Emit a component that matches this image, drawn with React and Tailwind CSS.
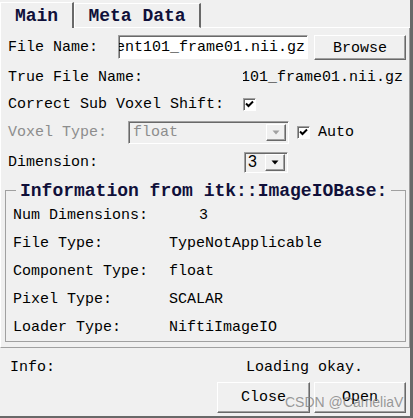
import React from 'react'

const raised =
  'border border-t-white border-l-white border-r-[#696969] border-b-[#696969] shadow-[inset_-1px_-1px_0_#a0a0a0]'
const sunken =
  'border border-t-[#a0a0a0] border-l-[#a0a0a0] border-r-white border-b-white shadow-[inset_1px_1px_0_#696969]'

function Check() {
  return (
    <div className={`w-[13px] h-[13px] bg-white flex items-center justify-center ${sunken}`}>
      <svg width="11" height="11" viewBox="0 0 11 11">
        <path d="M2 4.5 L4.5 7 L9 2.5" fill="none" stroke="#000" strokeWidth="2" />
      </svg>
    </div>
  )
}

function Arrow({ disabled }) {
  return (
    <div className={`w-[20px] h-[17px] bg-[#f0f0f0] flex items-center justify-center ${raised}`}>
      <svg width="8" height="5" viewBox="0 0 8 5">
        <path d="M0.5 0.5 H7.5 L4 4.5 Z" fill={disabled ? '#a0a0a0' : '#000'} />
      </svg>
    </div>
  )
}

const groupRows = [
  { label: 'Num Dimensions:', value: '3', pad: 'pl-[186px]' },
  { label: 'File Type:', value: 'TypeNotApplicable', pad: 'pl-[156px]' },
  { label: 'Component Type:', value: 'float', pad: 'pl-[156px]' },
  { label: 'Pixel Type:', value: 'SCALAR', pad: 'pl-[156px]' },
  { label: 'Loader Type:', value: 'NiftiImageIO', pad: 'pl-[156px]' },
]

export default function App() {
  return (
    <div className="relative w-[413px] h-[418px] bg-[#f0f0f0] border-r-[3px] border-b-2 border-r-[#696969] border-b-[#696969] text-[15px] text-black font-['Liberation_Mono',monospace] overflow-hidden">
      {/* tabs */}
      <div className="flex items-end h-[28px]">
        <div className="w-[74px] h-[26px] border-t border-l border-t-white border-l-white border-r-2 border-r-[#696969] flex items-center justify-center pt-[2px] font-bold text-[18px] text-[#10103a]">
          Main
        </div>
        <div className="w-[127px] h-[25px] border-t border-l border-b border-t-white border-l-white border-b-white border-r-2 border-r-[#696969] flex items-center justify-center pt-[2px] font-bold text-[18px] text-[#10103a]">
          Meta Data
        </div>
        <div className="flex-1 h-[1px] bg-white" />
      </div>

      {/* main panel */}
      <div className="w-[410px] h-[320px] border-l border-r border-b border-l-white border-r-[#a0a0a0] border-b-[#a0a0a0] pt-[6px]">
        <div className="flex items-center h-[26px] pl-[7px]">
          <span className="w-[110px] pt-[3px]">File Name:</span>
          <div className={`w-[190px] h-[24px] bg-white overflow-hidden flex items-center justify-end pr-[2px] pt-[2px] ${sunken}`}>
            <span className="whitespace-nowrap">patient101_frame01.nii.gz</span>
          </div>
          <button className={`ml-[6px] w-[92px] h-[25px] bg-[#f0f0f0] pt-[2px] ${raised}`}>Browse</button>
        </div>

        <div className="flex items-center h-[34px] pl-[7px] pt-[3px]">
          <span className="w-[235px]">True File Name:</span>
          <div className="w-[160px] overflow-hidden flex justify-end">
            <span className="whitespace-nowrap">101_frame01.nii.gz</span>
          </div>
        </div>

        <div className="flex items-center h-[20px] pl-[7px]">
          <span className="w-[235px] whitespace-nowrap pt-[3px]">Correct Sub Voxel Shift:</span>
          <Check />
        </div>

        <div className="flex items-center h-[36px] pl-[7px]">
          <span className="w-[120px] text-[#8d8d8d] pt-[3px]">Voxel Type:</span>
          <div className={`w-[161px] h-[23px] flex items-center justify-between pl-[4px] pr-[2px] ${sunken}`}>
            <span className="text-[#8d8d8d] pt-[2px]">float</span>
            <Arrow disabled />
          </div>
          <div className="ml-[8px]">
            <Check />
          </div>
          <span className="ml-[8px] pt-[3px]">Auto</span>
        </div>

        <div className="flex items-center h-[24px] pl-[7px]">
          <span className="w-[236px] pt-[3px]">Dimension:</span>
          <div className={`w-[44px] h-[21px] flex items-center justify-between pl-[3px] pr-[2px] ${sunken}`}>
            <span className="font-['Liberation_Sans',sans-serif] text-[16px]">3</span>
            <Arrow />
          </div>
        </div>

        <fieldset className="mt-[5px] ml-[4px] w-[401px] border border-[#a0a0a0]">
          <legend className="ml-[10px] px-[4px] h-[22px] leading-[24px] font-bold text-[18px] text-[#10103a] whitespace-nowrap">
            Information from itk::ImageIOBase:
          </legend>
          {groupRows.map((r) => (
            <div key={r.label} className="flex items-center h-[28px] pl-[7px] pt-[3px]">
              <span className="w-0 whitespace-nowrap">{r.label}</span>
              <span className={`${r.pad} whitespace-nowrap`}>{r.value}</span>
            </div>
          ))}
        </fieldset>
      </div>

      {/* info + buttons */}
      <div className="flex items-center h-[20px] mt-[8px] pl-[10px] pt-[4px]">
        <span className="w-[236px]">Info:</span>
        <span>Loading okay.</span>
      </div>
      <div className="flex justify-end gap-[4px] pr-[4px] mt-[6px] w-[410px]">
        <button className={`w-[93px] h-[31px] bg-[#f0f0f0] pt-[2px] ${raised}`}>Close</button>
        <button className={`w-[92px] h-[31px] bg-[#f0f0f0] pt-[2px] ${raised}`}>Open</button>
      </div>

      <span className="absolute left-[285px] top-[392px] font-['Liberation_Sans',sans-serif] text-[14px] text-[#808080]/80 whitespace-nowrap pointer-events-none">
        CSDN @CameliaV
      </span>
    </div>
  )
}
